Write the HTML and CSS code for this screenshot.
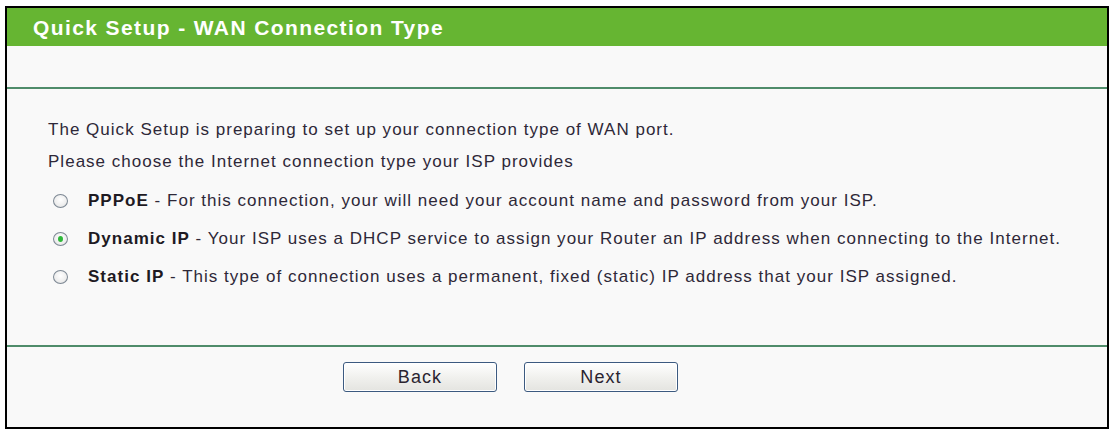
FILE: index.html
```html
<!DOCTYPE html>
<html>
<head>
<meta charset="utf-8">
<link rel="stylesheet" href="styles.css">
</head>
<body>
<div class="frame">
  <div class="title">Quick Setup - WAN Connection Type</div>
  <div class="blank"></div>
  <div class="sep"></div>
  <div class="content">
    <div class="line">The Quick Setup is preparing to set up your connection type of WAN port.</div>
    <div class="line">Please choose the Internet connection type your ISP provides</div>
    <div class="options">
      <div class="opt"><span class="radio"></span><b>PPPoE</b>&nbsp;- For this connection, your will need your account name and password from your ISP.</div>
      <div class="opt"><span class="radio checked"></span><b>Dynamic IP</b>&nbsp;- Your ISP uses a DHCP service to assign your Router an IP address when connecting to the Internet.</div>
      <div class="opt"><span class="radio"></span><b>Static IP</b>&nbsp;- This type of connection uses a permanent, fixed (static) IP address that your ISP assigned.</div>
    </div>
  </div>
  <div class="sep"></div>
  <div class="buttons">
    <button class="btn">Back</button>
    <button class="btn">Next</button>
  </div>
</div>
</body>
</html>
```
FILE: styles.css
```css
html, body { margin: 0; padding: 0; background: #ffffff; }
body { font-family: "Liberation Sans", Arial, sans-serif; }
.frame {
  margin: 6px 0 0 5px;
  width: 1100px;
  border: 2px solid #000;
  background: #f9f9f9;
}
.title {
  height: 38px;
  line-height: 39px;
  background: #66b532;
  color: #fff;
  font-weight: bold;
  font-size: 21px;
  letter-spacing: 1.4px;
  padding-left: 26px;
}
.blank { height: 41px; }
.sep { height: 2px; background: #4f8c6a; }
.content { padding: 25px 0 49px 41px; color: #2e2838; font-size: 17px; letter-spacing: 1.02px; }
.line { height: 32px; line-height: 32px; white-space: nowrap; }
.options { margin-top: 4px; }
.opt { height: 38px; line-height: 38px; display: flex; align-items: center; padding-left: 5px; white-space: nowrap; }
.opt b { color: #1e1a22; }
.radio {
  width: 15px; height: 14px; border-radius: 50%;
  border: 1px solid #7d8894;
  background: radial-gradient(circle at 50% 40%, #ffffff 0%, #eeeeee 60%, #d4d4d4 100%);
  margin-right: 20px; flex: none; box-sizing: border-box;
  position: relative;
}
.radio.checked::after {
  content: ""; position: absolute; left: 4px; top: 3px; width: 5px; height: 6px; border-radius: 50%;
  background: #2fb83a;
}
.buttons { padding: 15px 0 35px 336px; display: flex; gap: 27px; }
.btn {
  width: 154px; height: 30px; margin: 0; padding: 0;
  border: 1px solid #3c5a80; border-radius: 3px;
  background: linear-gradient(#ffffff, #f1f1ee 50%, #e4e4e0);
  font-family: "Liberation Sans", Arial, sans-serif; font-size: 18px; letter-spacing: 1.1px; color: #2a2430;
  box-shadow: inset 0 0 0 1px #fff;
}
```
